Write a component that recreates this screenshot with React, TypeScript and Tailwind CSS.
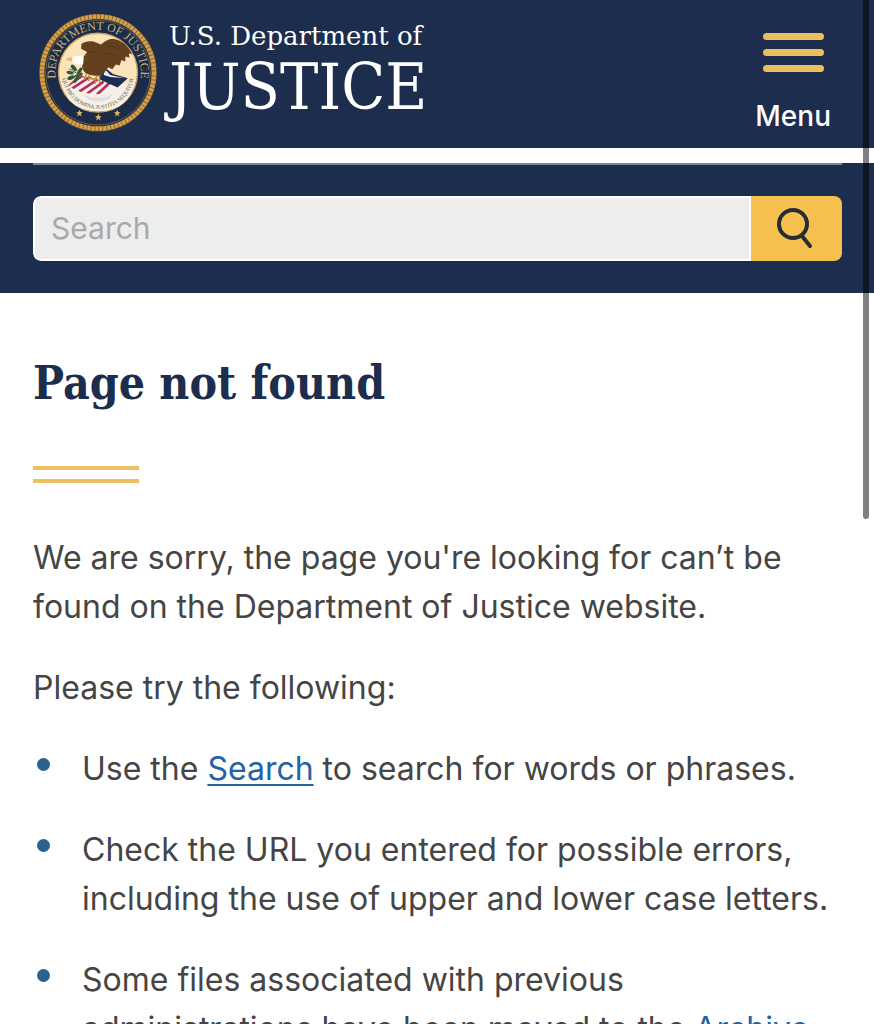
import type { ReactNode } from 'react'

const STARS = [
  [147, 327],
  [204, 339],
  [261, 327],
] as const

function Star({ x, y }: { x: number; y: number }) {
  return (
    <path
      transform={`translate(${x} ${y})`}
      d="M0 -11 L3 -4 L10 -3 L4 2 L7 9 L0 5 L-7 9 L-4 2 L-10 -3 L-3 -4 Z"
      fill="#dcb567"
    />
  )
}

function Seal() {
  return (
    <svg viewBox="25 27 356 356" className="size-[118px] shrink-0" aria-hidden="true">
      <defs>
        <path id="ring-outer" d="M203 333 A129 129 0 0 1 203 75 A129 129 0 0 1 203 333" />
        <path id="ring-inner" d="M203 95 A109 109 0 0 0 203 313 A109 109 0 0 0 203 95" />
        <clipPath id="shield-clip">
          <path d="M112 243 L146 212 L250 226 L292 240 Q256 268 200 269 Q146 268 112 243 Z" />
        </clipPath>
      </defs>

      {/* rope border */}
      <circle cx="203" cy="204" r="169" fill="#1b2b49" stroke="#94672a" strokeWidth="16" />
      <circle cx="203" cy="204" r="169" fill="none" stroke="#d3a24c" strokeWidth="13" strokeDasharray="9 3" />
      <circle cx="203" cy="204" r="158" fill="none" stroke="#8f7440" strokeWidth="2" />

      <circle cx="203" cy="204" r="119" fill="#fbe3bc" stroke="#cda65c" strokeWidth="4" />
      <path d="M92 225 Q140 258 203 259 Q265 258 314 225 Q302 319 203 320 Q104 318 92 225 Z" fill="#f7f0e4" />

      <text fill="#c9b27c" fontSize="36" fontFamily="Liberation Serif, serif" textAnchor="middle">
        <textPath href="#ring-outer" startOffset="50%">DEPARTMENT OF JUSTICE</textPath>
      </text>
      <text fill="#5f5b57" fontSize="17" fontFamily="Liberation Serif, serif" textAnchor="middle">
        <textPath href="#ring-inner" startOffset="50%">QUI PRO DOMINA JUSTITIA SEQUITUR</textPath>
      </text>

      {/* shield */}
      <g clipPath="url(#shield-clip)">
        <rect x="100" y="205" width="195" height="70" fill="#f6eef0" />
        <g stroke="#b5304e" strokeWidth="8">
          <path d="M112 242 L158 212" />
          <path d="M120 255 L184 213" />
          <path d="M140 266 L202 224" />
          <path d="M168 269 L220 231" />
          <path d="M200 270 L240 233" />
        </g>
      </g>
      <path d="M218 184 L248 208 L293 221 L262 249 L207 224 Z" fill="#1c2d52" />
      <path d="M224 194 L240 211 L280 220 L240 217 L220 211 Z" fill="#f3efea" />
      <path d="M158 270 Q204 291 249 267 L235 285 Q205 297 174 285 Z" fill="#dfdfe3" />

      {/* olive branch */}
      <g fill="#31583e">
        <ellipse cx="130" cy="190" rx="12" ry="6" transform="rotate(50 130 190)" />
        <ellipse cx="119" cy="204" rx="11" ry="5" transform="rotate(10 119 204)" />
        <ellipse cx="148" cy="198" rx="12" ry="5" transform="rotate(-55 148 198)" />
        <ellipse cx="122" cy="219" rx="12" ry="6" transform="rotate(-20 122 219)" />
        <ellipse cx="137" cy="225" rx="12" ry="5" transform="rotate(-55 137 225)" />
        <ellipse cx="145" cy="211" rx="13" ry="5" transform="rotate(-25 145 211)" />
      </g>
      <path d="M116 192 Q138 206 165 220" fill="none" stroke="#55683f" strokeWidth="3" />

      {/* eagle */}
      <path
        d="M158 158 L170 142 L152 132 L153 117 Q166 106 190 110 L212 119 Q230 102 250 102 Q286 108 306 148 L296 146 L298 159 L286 155 L285 170 L274 166 L268 182 L257 179 L246 194 L234 188 L222 204 L208 214 Q184 216 166 206 Q152 192 156 177 Z"
        fill="#64401f"
      />
      <path d="M172 140 Q190 138 205 150 M230 124 Q252 121 270 139 M220 146 Q244 143 260 160" fill="none" stroke="#53351a" strokeWidth="3" />
      <path d="M122 159 Q142 150 160 157 L158 179 Q144 181 130 176 Z" fill="#fffdf6" />
      <path d="M126 158 Q112 155 104 166 Q114 165 124 171 Z" fill="#edb965" />
      <path d="M168 209 L162 225 M176 212 L175 229 M199 212 L194 237 M207 212 L208 235 M180 221 Q189 227 195 220" fill="none" stroke="#bc8c40" strokeWidth="5" />

      {STARS.map(([x, y]) => (
        <Star key={x} x={x} y={y} />
      ))}
    </svg>
  )
}

function SearchIcon() {
  return (
    <svg viewBox="0 0 40 44" className="h-11 w-10" fill="none" stroke="#252f33" strokeWidth="4" aria-hidden="true">
      <circle cx="16" cy="17" r="14" />
      <path d="M25 29 L33 39" strokeLinecap="round" />
    </svg>
  )
}

function Header() {
  return (
    <header>
      <div className="flex h-[148px] items-start justify-between bg-[#1d2d4d] pr-[43px] pl-[39px]">
        <a href="#home" className="flex pt-[14px] text-white">
          <Seal />
          <span className="ml-3 flex flex-col whitespace-nowrap">
            <span className="pt-1 font-['DejaVu_Serif',serif] text-[26px] leading-9">
              U.S. Department of
            </span>
            <span className="font-['DejaVu_Serif_Condensed','Liberation_Serif',serif] text-[64px] leading-[66px]">
              JUSTICE
            </span>
          </span>
        </a>
        <button type="button" className="flex flex-col items-center pt-[33px] text-white">
          <span className="flex flex-col gap-[9px]">
            <span className="h-[7px] w-[61px] rounded-full bg-[#ecbe5c]" />
            <span className="h-[7px] w-[61px] rounded-full bg-[#ecbe5c]" />
            <span className="h-[7px] w-[61px] rounded-full bg-[#ecbe5c]" />
          </span>
          <span className="mt-7 text-[28px] leading-8 font-medium">Menu</span>
        </button>
      </div>

      <div className="mt-[15px] bg-[#1d2d4d] pr-8 pb-8 pl-[33px]">
        <div className="h-[2px] bg-[#7f899b]" />
        <form role="search" className="mt-[31px] flex h-[65px] overflow-hidden rounded-lg">
          <input
            type="search"
            aria-label="Search"
            placeholder="Search"
            className="min-w-0 flex-1 rounded-l-lg border-2 border-white bg-[#ededed] px-4 text-[30px] text-[#454545] placeholder:text-[#a9a9a9]"
          />
          <button
            type="submit"
            aria-label="Submit search"
            className="flex w-[91px] items-center justify-center bg-[#f5c04f]"
          >
            <SearchIcon />
          </button>
        </form>
      </div>
    </header>
  )
}

function BulletItem({ children }: { children: ReactNode }) {
  return (
    <li className="flex">
      <span className="mt-[14px] mr-8 ml-1 size-[13px] shrink-0 rounded-full bg-[#2a628f]" />
      <p>{children}</p>
    </li>
  )
}

function TextLink({ href, children }: { href: string; children: ReactNode }) {
  return (
    <a href={href} className="text-[#2562a5] underline decoration-2 underline-offset-4">
      {children}
    </a>
  )
}

export default function App() {
  return (
    <div className="relative h-screen overflow-hidden bg-white font-['Inter',sans-serif]">
      <Header />

      <main className="px-[33px] pt-[58px] text-[32px] leading-[49px] text-[#454545]">
        <h1 className="font-['DejaVu_Serif_Condensed','Liberation_Serif',serif] text-[46px] leading-[64px] font-bold text-[#1d2d4d]">
          Page not found
        </h1>
        <div className="mt-[51px] h-[17px] w-[106px] border-y-4 border-[#ecc063]" />

        <div className="mt-[50px] flex flex-col gap-8">
          <p>
            We are sorry, the page you're looking for can’t be found on the Department of Justice
            website.
          </p>
          <p>Please try the following:</p>
          <ul className="flex flex-col gap-8">
            <BulletItem>
              Use the <TextLink href="#search">Search</TextLink> to search for words or phrases.
            </BulletItem>
            <BulletItem>
              Check the URL you entered for possible errors, including the use of upper and lower
              case letters.
            </BulletItem>
            <BulletItem>
              Some files associated with previous administrations have been moved to the{' '}
              <TextLink href="#archive">Archive</TextLink>.
            </BulletItem>
          </ul>
        </div>
      </main>

      {/* overlay scroll thumb */}
      <div className="absolute top-0 right-[5px] h-[519px] w-[6px] rounded-b-full bg-black/50" />
    </div>
  )
}
